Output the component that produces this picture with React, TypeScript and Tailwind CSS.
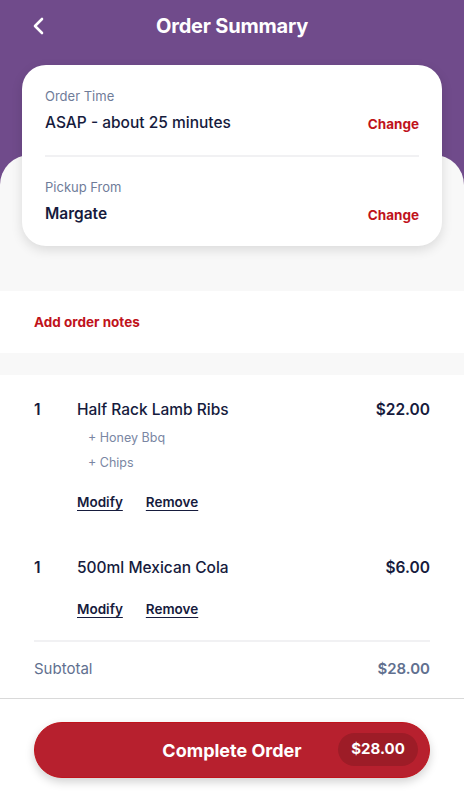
import React from "react";

const font = { fontFamily: "Inter, 'Noto Sans', sans-serif" };

function ItemRow({ name, price, mods }: { name: string; price: string; mods: string[] }) {
  return (
    <div className="flex flex-col">
      <div className="flex items-center text-[15.5px] text-[#161b3d] h-[24px]">
        <span className="w-[43px] font-semibold">1</span>
        <span className="flex-1 font-medium">{name}</span>
        <span className="font-semibold">{price}</span>
      </div>
      {mods.length > 0 && (
        <div className="flex flex-col pl-[54px] mt-[6px] gap-[6px]">
          {mods.map((m) => (
            <span key={m} className="text-[12.5px] text-[#7a86a3] h-[19px] leading-[19px]">
              + {m}
            </span>
          ))}
        </div>
      )}
      <div
        className={
          mods.length > 0
            ? "flex gap-[23px] pl-[43px] mt-[20px] text-[13.5px] font-semibold text-[#161b3d] h-[21px] leading-[21px]"
            : "flex gap-[23px] pl-[43px] mt-[19px] text-[13.5px] font-semibold text-[#161b3d] h-[21px] leading-[21px]"
        }
      >
        <span className="underline underline-offset-[3px] decoration-[1px]">Modify</span>
        <span className="underline underline-offset-[3px] decoration-[1px]">Remove</span>
      </div>
    </div>
  );
}

export default function App() {
  return (
    <div style={font} className="w-[464px] h-[800px] flex flex-col bg-white overflow-hidden">
      <div className="bg-[#704b8b] shrink-0 flex flex-col">
        <div className="h-[52px] flex items-center relative">
          <svg className="absolute left-[31px] top-[17px]" width="16" height="18" viewBox="0 0 16 18" fill="none">
            <path d="M11 2 L4 9 L11 16" stroke="white" strokeWidth="2.6" strokeLinecap="round" strokeLinejoin="round" />
          </svg>
          <div className="w-full text-center text-white text-[20px] font-bold tracking-[-0.2px]">Order Summary</div>
        </div>
        <div className="h-[103px]" />
        <div className="bg-[#f8f8f8] rounded-t-[30px] pb-[45px] px-[22px] flex flex-col">
          <div className="relative -mt-[90px] bg-white rounded-[24px] shadow-[0_4px_12px_rgba(0,0,0,0.12)] px-[23px]">
            <div className="pt-[22px] pb-[20px] border-b-[2px] border-[#f1f1f3]">
              <div className="text-[13px] text-[#6f7c99] h-[18px] leading-[18px]">Order Time</div>
              <div className="flex items-center justify-between mt-[6px] h-[24px]">
                <span className="text-[15.5px] font-medium text-[#161b3d]">ASAP - about 25 minutes</span>
                <span className="text-[13.5px] font-bold text-[#c0131b] mt-[2px]">Change</span>
              </div>
            </div>
            <div className="pt-[21px] pb-[20px]">
              <div className="text-[13px] text-[#6f7c99] h-[18px] leading-[18px]">Pickup From</div>
              <div className="flex items-center justify-between mt-[6px] h-[24px]">
                <span className="text-[15.5px] font-semibold text-[#161b3d]">Margate</span>
                <span className="text-[13.5px] font-bold text-[#c0131b] mt-[2px]">Change</span>
              </div>
            </div>
          </div>
        </div>
      </div>
      <div className="bg-white h-[62px] shrink-0 flex items-center px-[34px]">
        <span className="text-[13.5px] font-bold text-[#c0131b]">Add order notes</span>
      </div>
      <div className="bg-[#f8f8f8] h-[22px] shrink-0" />
      <div className="bg-white flex-1 flex flex-col px-[34px] pt-[23px]">
        <ItemRow name="Half Rack Lamb Ribs" price="$22.00" mods={["Honey Bbq", "Chips"]} />
        <div className="h-[43px]" />
        <ItemRow name="500ml Mexican Cola" price="$6.00" mods={[]} />
        <div className="mt-[20px] border-t-[2px] border-[#f1f1f3]" />
        <div className="flex justify-between items-center h-[54px] text-[15px] text-[#61708f]">
          <span>Subtotal</span>
          <span className="font-semibold">$28.00</span>
        </div>
      </div>
      <div className="border-t border-[#d9d9d9] bg-white h-[102px] shrink-0 px-[34px] pt-[23px]">
        <div className="h-[56px] rounded-full bg-[#b7202e] border border-[#c0131b] shadow-[0_4px_10px_rgba(0,0,0,0.18)] flex items-center relative">
          <span className="w-full text-center text-white text-[18px] font-bold">Complete Order</span>
          <span className="absolute right-[11px] top-[10px] h-[33px] w-[80px] rounded-full bg-[#9d1c27] text-white text-[15px] font-bold flex items-center justify-center">
            $28.00
          </span>
        </div>
      </div>
    </div>
  );
}
